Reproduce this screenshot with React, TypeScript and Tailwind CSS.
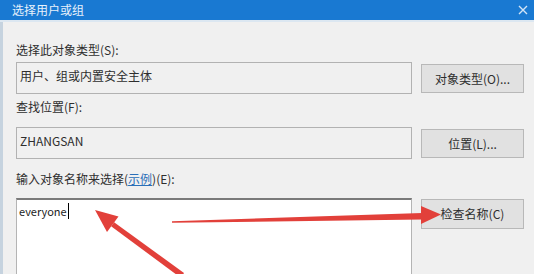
const SelectUserDialog = () => {
  const rows = [
    { label: "选择此对象类型(S):", value: "用户、组或内置安全主体", button: "对象类型(O)..." },
    { label: "查找位置(F):", value: "ZHANGSAN", button: "位置(L)..." },
  ]

  return (
    <div className="relative w-[534px] h-[274px] overflow-hidden bg-[#f0f0f0] font-[family-name:'Noto_Sans_CJK_SC',sans-serif] text-[12px] leading-[16px] text-[#2e2e2e]">
      {/* Title bar */}
      <div className="h-[20px] bg-[#1979d2] flex items-center justify-between pl-[12px] pr-[6px] text-white/90">
        <span className="text-[12px]">选择用户或组</span>
        <svg width="10" height="10" viewBox="0 0 10 10" className="text-white/80">
          <path d="M1 1 L9 9 M9 1 L1 9" stroke="currentColor" strokeWidth="1.4" />
        </svg>
      </div>
      <div className="h-[2px] bg-[#dce7f1]" />

      <div className="flex h-[252px]">
        <div className="w-[3px] bg-[#c6d3df]" />
        <div className="flex-1 pl-[13px] pt-[20px]">
          {rows.map((row, i) => (
            <div key={i} className={i === 0 ? "" : "mt-[5px]"}>
              <div className="h-[16px]">{row.label}</div>
              <div className={`flex gap-[9px] ${i === 0 ? "mt-[4px]" : "mt-[12px]"}`}>
                <div className="w-[396px] h-[32px] border border-[#b2b2b2] pl-[3px] pt-[5px]">{row.value}</div>
                <div className="w-[103px] h-[29px] mt-[2px] bg-[#e1e1e1] border border-[#b8b8b8] flex items-center justify-center">
                  {row.button}
                </div>
              </div>
            </div>
          ))}

          <div className="mt-[12px] h-[16px]">
            输入对象名称来选择(<span className="text-[#2a6fb8] underline">示例</span>)(E):
          </div>
          <div className="flex gap-[9px] mt-[11px]">
            <div className="w-[396px] h-[90px] bg-white border border-[#b4b4b4] border-t-2 border-t-[#7a7a7a] pl-[2px] pt-[3px]">
              <span className="text-[11px] text-[#222] border-r border-black pr-[1px]">everyone</span>
            </div>
            <div className="w-[103px] h-[30px] mt-[1px] bg-[#e1e1e1] border border-[#b8b8b8] flex items-center justify-center">
              检查名称(C)
            </div>
          </div>
        </div>
      </div>

      {/* Red annotation arrows */}
      <svg className="absolute left-0 top-0" width="534" height="274" viewBox="0 0 534 274">
        <g fill="#e2403a">
          <polygon points="111.1,226.2 114.1,222.2 184,273 181,278" />
          <polygon points="95,210 118.5,216.5 107,232" />
          <polygon points="172,221.2 172,222.8 422,219.5 422,213" />
          <polygon points="441,214.5 421,206 421,224" />
        </g>
      </svg>
    </div>
  )
}

export default function App() {
  return <SelectUserDialog />
}
